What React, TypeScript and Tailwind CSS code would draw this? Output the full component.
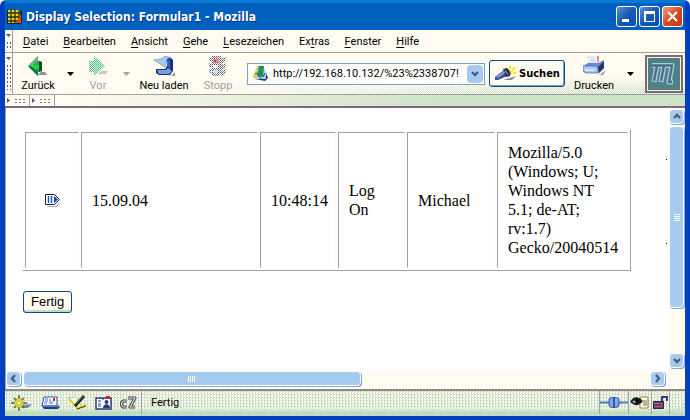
import React from "react";

const DITHER =
  "bg-[length:auto,auto,2px_2px] bg-[linear-gradient(to_bottom,#fffbf0_58%,transparent),linear-gradient(to_right,#fffbf0_30%,transparent_75%),conic-gradient(#c0dcc0_25%,#fffbf0_0_50%,#c0dcc0_0_75%,#fffbf0_0)]";
const DITHER_RIGHT =
  "bg-[length:auto,2px_2px] bg-[linear-gradient(to_right,#fffbf0_8%,transparent_65%),conic-gradient(#c0dcc0_25%,#dce8d0_0_50%,#c0dcc0_0_75%,#dce8d0_0)]";
const DITHER_STATUS =
  "bg-[length:auto,3px_3px] bg-[linear-gradient(to_bottom,transparent_70%,#c0dcc0_85%),conic-gradient(#c0dcc0_25%,#fffbf0_0_50%,#e4ecd8_0_75%,#fffbf0_0)]";

function Grip() {
  return (
    <div className="flex w-2 shrink-0 flex-col items-center gap-1 border-r border-[#a0a0a4] pt-1 pb-1">
      <svg width="5" height="3" aria-hidden="true"><path d="M0 0h5L2.5 3z" fill="#405890" /></svg>
      <div className="w-[5px] flex-1 bg-[radial-gradient(#506080_35%,transparent_40%)] bg-[length:3px_4px]" />
    </div>
  );
}

function SideGrip() {
  return (
    <div className="flex w-[25px] items-center gap-1 border-r border-[#a0a0a4] bg-[#fffbf0] pl-0.5">
      <svg width="3" height="5" aria-hidden="true"><path d="M0 0v5L3 2.5z" fill="#405890" /></svg>
      <div className="h-[6px] w-3 bg-[radial-gradient(#707880_35%,transparent_40%)] bg-[length:4px_3px]" />
    </div>
  );
}

function MenuItem({ pre = "", hot, post }: { pre?: string; hot: string; post: string }) {
  return (
    <button type="button" className="whitespace-nowrap">
      {pre}<span className="underline underline-offset-2">{hot}</span>{post}
    </button>
  );
}

function Caret({ label, dim = false }: { label: string; dim?: boolean }) {
  return (
    <button type="button" aria-label={label} className="flex w-3.5 shrink-0 items-center justify-center">
      <svg width="7" height="4"><path d="M0 0h7L3.500 4z" fill={dim ? "#a0a0a4" : "#000"} /></svg>
    </button>
  );
}

function Tool({ label, width, dim = false, children }: { label: string; width: string; dim?: boolean; children: React.ReactNode }) {
  return (
    <button type="button" className={`${width} ${dim ? "text-[#a0a0a4]" : "text-black"} flex shrink-0 flex-col items-center justify-between pt-[3px] pb-px whitespace-nowrap`}>
      {children}
      <span className="leading-[14px]">{label}</span>
    </button>
  );
}

function BackIcon() {
  return (
    <svg width="20" height="21" viewBox="0 0 20 21">
      <path d="M9 19h10l-2-3h-4z" fill="#909090" />
      <path d="M0 10 10 0v5l4 1v9l-4 1v4z" fill="#309858" />
      <path d="M0 10 10 0v5l-6 5z" fill="#68b880" />
      <path d="M3 9h10v4H6z" fill="#10e038" />
      <path d="M11 5v11l3-1V6z" fill="#085028" />
      <path d="M0 10 10 20v-4L4 11z" fill="#087840" />
    </svg>
  );
}

function ForwardIcon() {
  return (
    <svg width="20" height="21" viewBox="0 0 20 21">
      <defs><pattern id="fw" width="2" height="2" patternUnits="userSpaceOnUse"><rect width="2" height="2" fill="#e8f8e0" /><rect width="1" height="1" fill="#40b878" /><rect x="1" y="1" width="1" height="1" fill="#60c890" /></pattern></defs>
      <path d="M9 18h9l2-3h-6z" fill="#c8c8c8" />
      <path d="M1 5h5V0l11 10L6 20v-4H1z" fill="url(#fw)" />
    </svg>
  );
}

function ReloadIcon() {
  return (
    <svg width="21" height="21" viewBox="0 0 21 21">
      <path d="M14 19h4l3-3v4z" fill="#909090" />
      <path d="M11 1h5l3 3v11l-3 4H5l-3-2v-4h9l2-3V6z" fill="#183078" />
      <path d="M3 14h9l2-2 4 3-3 3H5z" fill="#70a0e0" />
      <path d="M0 4 7 3l4-3 6 2-4 1-2 8z" fill="#a6caf0" stroke="#6080c0" strokeWidth=".6" />
      <path d="M13 4h3v9l-3-3z" fill="#3060b8" />
    </svg>
  );
}

function StopIcon() {
  return (
    <svg width="20" height="21" viewBox="0 0 20 21">
      <defs><pattern id="st" width="2" height="2" patternUnits="userSpaceOnUse"><rect width="2" height="2" fill="#fffbf0" /><rect width="1" height="1" fill="#505068" /><rect x="1" y="1" width="1" height="1" fill="#8090a0" /></pattern></defs>
      <path d="M4 0h9v18l-2 2H5l-2-2zM13 2l5-1-1 4-4 3zM13 9l5-2-1 5-4 2zM13 15l5-2-1 5-4 2zM4 2 1 1v3l3 2zM4 8 1 7v3l3 2zM4 14l-3-1v3l3 2z" fill="url(#st)" />
      <path d="M5 3h6v4H5z" fill="#e09090" /><path d="M6 4h2v2H6zM9 6h1v1H9z" fill="#e03030" />
      <path d="M5 9h5v3H5z" fill="#fff" /><path d="M5 14h5v3H5z" fill="#c8e8f0" />
    </svg>
  );
}

function PrinterIcon() {
  return (
    <svg width="23" height="19" viewBox="0 0 23 19">
      <path d="M14 18h4l5-4-3 5z" fill="#909090" />
      <path d="M5 1h10l-1 8H6z" fill="#fff" stroke="#c0d0e0" strokeWidth=".7" />
      <path d="M7 3h5M7 5h6M7 7h6" stroke="#a6caf0" /><path d="M15 0v6" stroke="#e07070" strokeWidth="1.500" />
      <path d="M0 10 5 7h10l6-3v8l-5 5H3l-3-2z" fill="#6888d0" />
      <path d="M0 10h13l2 2v5H3l-3-2z" fill="#a6caf0" stroke="#5070b0" strokeWidth=".8" />
      <path d="M15 11 21 5v7l-5 5z" fill="#283870" /><path d="M2 14h9" stroke="#fff" />
    </svg>
  );
}

function PageIcon() {
  return (
    <svg width="17" height="17" viewBox="0 0 17 17" className="shrink-0">
      <path d="M5 1h6l5 11-3 3-12-2z" fill="#a6caf0" /><path d="m2 12 4-9M5 13l-2-4m9 4-2-5" stroke="#e8d820" strokeWidth="2" />
      <path d="M7 1h5l-1 11-6-1z" fill="#209060" /><path d="m3 14 10 2 3-3-2-5v6z" fill="#203878" /><path d="m3 9 2-1 4 6m2-2 2-4" fill="none" stroke="#2050c0" />
    </svg>
  );
}

function TorchIcon() {
  return (
    <svg width="23" height="17" viewBox="0 0 23 17">
      <path d="M9 15 22 11l-4 4z" fill="#8090a8" />
      <path d="m1 12 9-7 5 3-2 3-9 4H1z" fill="#405098" /><path d="m9 4 4-1 4 4-1 4-4 1z" fill="#283050" />
      <path d="m2 12 8-6 1 2-7 5z" fill="#80a0d8" /><path d="m11 5 3 5" stroke="#90a8d0" />
      <path d="M16 4V1m2 5 3-4m-2 6h3M16 6l2 2" stroke="#f8e800" strokeWidth="2" />
    </svg>
  );
}

function Arrow({ dir }: { dir: "up" | "down" | "left" | "right" }) {
  const paths = { up: "m2 6 3-3 3 3", down: "m2 3 3 3 3-3", left: "m6 1-3 3.500L6 8", right: "m3 1 3 3.500L3 8" };
  return <svg width="10" height="9" viewBox="0 0 10 9"><path d={paths[dir]} fill="none" stroke="#505880" strokeWidth="2.300" /></svg>;
}

function ScrollButton({ dir }: { dir: "up" | "down" | "left" | "right" }) {
  return (
    <button type="button" aria-label={`Scroll ${dir}`} className="flex size-[15px] shrink-0 items-center justify-center rounded-sm border border-white bg-[#a6caf0] shadow-[1px_1px_0_#80a8d8]">
      <Arrow dir={dir} />
    </button>
  );
}

function WindowButtons() {
  const box = "flex size-[21px] items-center justify-center rounded-[3px] border border-white";
  return (
    <div className="flex gap-0.5">
      <button type="button" aria-label="Minimize" className={`${box} bg-linear-to-br from-[#5890d8] via-[#1858b0] to-[#0050c0]`}>
        <svg width="15" height="15"><path d="M3 10h7v3H3z" fill="#fff" /></svg>
      </button>
      <button type="button" aria-label="Maximize" className={`${box} bg-linear-to-br from-[#5890d8] via-[#1858b0] to-[#0050c0]`}>
        <svg width="15" height="15"><path d="M2 2h11v11H2zM4 5v7h8V5z" fill="#fff" fillRule="evenodd" /></svg>
      </button>
      <button type="button" aria-label="Close" className={`${box} bg-linear-to-br from-[#f0a080] via-[#d84820] to-[#c83808]`}>
        <svg width="15" height="15"><path d="m3 3 9 9m0-9-9 9" stroke="#fff" strokeWidth="2.200" /></svg>
      </button>
    </div>
  );
}

function Navigator() {
  return (
    <svg width="22" height="16" viewBox="0 0 22 16"><path d="m12 10 9-1-4 4h-6z" fill="#6888b8" /><path d="M8 0v16M0 8h16M3 3l10 10M13 3 3 13" stroke="#606030" strokeWidth="1.500" /><circle cx="8" cy="8" r="4.500" fill="#f0e840" stroke="#a09820" /><path d="M6 6h4v4H6z" fill="#fff8b0" stroke="#a0a030" strokeWidth=".8" /></svg>
  );
}
function Mail() {
  return (
    <svg width="19" height="14" viewBox="0 0 19 14"><path d="M0 9h16l3 2-2 2H3z" fill="#283878" /><path d="M3 1h13v9H1z" fill="#fff" stroke="#3050b0" /><path d="M4 3h3M4 5h3m-4 2h3m3-4v5m2-3v3" stroke="#4070d0" /><path d="M12 2h2v3h-2z" fill="#e02020" /><path d="M1 10h17" stroke="#5080d0" strokeWidth="2" /></svg>
  );
}
function Composer() {
  return (
    <svg width="19" height="15" viewBox="0 0 19 15"><path d="m0 3 8-1 6 10-5 2z" fill="#fff" stroke="#a6a890" strokeWidth=".7" /><path d="m1 4 9 9 8-3" fill="none" stroke="#e8d800" strokeWidth="2" /><path d="m7 11 9-10" stroke="#202820" strokeWidth="3" /><path d="m8 9 7-8" stroke="#409060" /><path d="m9 14 9-3" stroke="#303030" /></svg>
  );
}
function AddressBook() {
  return (
    <svg width="17" height="14" viewBox="0 0 17 14"><path d="M1 2h6l1 1 1-1h7v11H1z" fill="#fff" stroke="#283878" strokeWidth="1.500" /><path d="M11 0h4v3h-4z" fill="#e02020" /><path d="M3 5h3M3 8h3m-3 2h3" stroke="#283878" /><circle cx="11.500" cy="6" r="2" fill="#283878" /><path d="M8 12c0-5 7-5 7 0z" fill="#283878" /></svg>
  );
}
function Chat() {
  return (
    <svg width="17" height="14" viewBox="0 0 17 14" fill="none" strokeLinejoin="round"><path d="M7 5H3L1.500 7v2L3 11h4M8 2h7l-5 9h5" stroke="#404048" strokeWidth="3.200" /><path d="M7 5H3L1.500 7v2L3 11h4M8 2h7l-5 9h5" stroke="#e0e8e0" strokeWidth="1.200" /></svg>
  );
}

export default function App() {
  return (
    <div className="flex h-screen min-w-[640px] flex-col overflow-hidden rounded-t-md border-x-[5px] border-b-4 border-[#0040c0] bg-[#fffbf0] font-[Roboto,sans-serif] text-[11px] leading-[14px] text-black">
      <header className="flex h-[30px] shrink-0 items-center gap-1 border-t-[3px] border-[#0878d0] bg-[#0060c0] pr-0.5 pl-0.5">
        <svg width="15" height="15" viewBox="0 0 15 15"><path d="M0 1h13l2 2v10l-2 2H0z" fill="#182028" /><path d="M1 1h12v10L9 14H1z" fill="#e8d030" /><path d="M4 0v15M8 0v15M12 1v12M0 4h14M0 8h14M0 12h12" stroke="#303010" strokeWidth="1.300" /><path d="m14 5-5 9h5z" fill="#d84818" /></svg>
        <h1 className="flex-1 font-['DejaVu_Sans_Condensed','DejaVu_Sans',sans-serif] text-xs font-bold whitespace-nowrap text-white [text-shadow:1px_1px_0_#003080] [font-stretch:condensed]">Display Selection: Formular1 - Mozilla</h1>
        <WindowButtons />
      </header>

      <nav className="flex h-[23px] shrink-0 border-b border-[#a0a0a4]">
        <Grip />
        <div className="flex items-center gap-[15px] pt-0.5 pl-2.5">
          <MenuItem hot="D" post="atei" />
          <MenuItem hot="B" post="earbeiten" />
          <MenuItem hot="A" post="nsicht" />
          <MenuItem hot="G" post="ehe" />
          <MenuItem hot="L" post="esezeichen" />
          <MenuItem pre="Ex" hot="t" post="ras" />
          <MenuItem hot="F" post="enster" />
          <MenuItem hot="H" post="ilfe" />
        </div>
      </nav>

      <div className={`flex h-[42px] shrink-0 border-b border-[#a0a0a4] ${DITHER}`}>
        <Grip />
        <Tool label="Zurück" width="w-[50px]"><BackIcon /></Tool>
        <Caret label="Zurück Verlauf" />
        <Tool label="Vor" width="w-[42px]" dim><ForwardIcon /></Tool>
        <Caret label="Vor Verlauf" dim />
        <Tool label="Neu laden" width="w-[62px]"><ReloadIcon /></Tool>
        <Tool label="Stopp" width="w-[46px]" dim><StopIcon /></Tool>
        <div className="ml-1.5 flex h-[22px] min-w-0 flex-1 items-center self-center border border-[#80a0c0] bg-white pl-1">
          <PageIcon />
          <input aria-label="Adresse" defaultValue="http://192.168.10.132/%23%2338707!" className="ml-1 min-w-0 flex-1 bg-transparent outline-none" />
          <button type="button" aria-label="Adressliste" className="mr-px flex h-[18px] w-4 items-center justify-center rounded-sm bg-[#a6caf0]"><Arrow dir="down" /></button>
        </div>
        <button type="button" className="ml-1 flex h-[27px] w-[76px] items-center justify-center gap-0.5 self-center rounded-[3px] border border-[#104880] bg-[#fffbf0] font-['DejaVu_Sans_Condensed','DejaVu_Sans',sans-serif] font-bold shadow-[inset_-1px_-1px_0_#80a0c0] [font-stretch:condensed]">
          <TorchIcon />Suchen
        </button>
        <Tool label="Drucken" width="w-[58px]"><PrinterIcon /></Tool>
        <Caret label="Druckoptionen" />
        <div className="mr-0.5 ml-2 flex size-[38px] shrink-0 items-center justify-center self-center border-2 border-[#806878] bg-[#f0f0e8]">
          <svg width="32" height="32" viewBox="0 0 32 32" fill="none" strokeLinejoin="round">
            <path d="M0 0h32v32H0z" fill="#508080" />
            <path d="M4 7.500h5L6 24m3-16.500h7L13 24m3-16.500h8l-3 16.500h4" stroke="#a6caf0" strokeWidth="5" />
            <path d="M4 7.500h5L6 23m3-15.500h7L13 23m3-15.500h8l-3 16.500h3" stroke="#487080" strokeWidth="2.400" />
          </svg>
        </div>
      </div>

      <div className={`flex h-[13px] shrink-0 border-b-2 border-[#806878] ${DITHER_RIGHT}`}>
        <SideGrip /><SideGrip />
      </div>

      <div className="flex min-h-0 flex-1 border-l border-[#a0a0a4]">
        <div className="flex min-w-0 flex-1 flex-col">
          <main className="relative min-h-0 flex-1 overflow-hidden bg-white pt-[21px] pl-4">
            <table className="w-[609px] table-fixed border-separate border-spacing-[2px] border border-t-[#fffbf0] border-r-[#a0a0a4] border-b-[#a0a0a4] border-l-[#fffbf0] font-['Liberation_Serif',serif] text-base leading-[19px] [&_td]:border [&_td]:border-t-[#a0a0a4] [&_td]:border-r-[#fffbf0] [&_td]:border-b-[#fffbf0] [&_td]:border-l-[#a0a0a4] [&_td]:py-2.5 [&_td]:pl-2.5">
              <colgroup>
                <col className="w-[54px]" /><col className="w-[177px]" /><col className="w-[76px]" /><col className="w-[67px]" /><col className="w-[88px]" /><col />
              </colgroup>
              <tbody>
                <tr>
                  <td>
                    <a href="#eintrag" aria-label="Eintrag öffnen" className="flex justify-center pr-2">
                      <svg width="16" height="13" viewBox="0 0 16 13"><path d="M2 12h9l5-5-4 6H2z" fill="#b0b0b0" /><path d="M.5.5h9l5 5-5 5h-9z" fill="#fff" stroke="#182030" /><path d="M3.500 2v7m3-7v7" stroke="#2058d0" strokeWidth="1.500" /><path d="M9 2v7l4-3.500z" fill="#1038d0" /></svg>
                    </a>
                  </td>
                  <td>15.09.04</td>
                  <td>10:48:14</td>
                  <td>Log<br />On</td>
                  <td>Michael</td>
                  <td>Mozilla/5.0<br />(Windows; U;<br />Windows NT<br />5.1; de-AT;<br />rv:1.7)<br />Gecko/20040514</td>
                </tr>
              </tbody>
            </table>
            <button type="button" className="mt-5 ml-px h-[22px] rounded-[3px] border border-[#104880] bg-[#fffbf0] px-[7px] font-['Liberation_Sans',sans-serif] text-[13px] shadow-[inset_0_-2px_0_#c0dcc0]">Fertig</button>
            <span className="absolute top-12 right-0.5 h-1 w-px border-t border-b border-t-[#a6caf0] border-b-black" />
            <span className="absolute top-[132px] right-0.5 h-1 w-px border-t border-b border-t-[#a6caf0] border-b-black" />
          </main>
          <div className="flex h-[18px] shrink-0 items-start gap-0.5 pr-1">
            <ScrollButton dir="left" />
            <div className="h-[15px] flex-1">
              <div className="flex h-full w-[54%] items-center justify-center rounded-sm border border-white bg-[#a6caf0] shadow-[1px_1px_0_#80a8d8]">
                <span className="flex gap-px"><i className="h-1.5 w-px bg-white" /><i className="h-1.5 w-px bg-white" /><i className="h-1.5 w-px bg-white" /><i className="h-1.5 w-px bg-white" /></span>
              </div>
            </div>
            <ScrollButton dir="right" />
          </div>
        </div>
        <div className="flex w-4 shrink-0 flex-col gap-0.5 pt-px pb-[21px]">
          <ScrollButton dir="up" />
          <div className="w-[15px] flex-1">
            <div className="flex h-[81%] flex-col items-center justify-center gap-px rounded-sm border border-white bg-[#a6caf0] shadow-[1px_1px_0_#80a8d8]">
              <i className="h-px w-1.5 bg-white" /><i className="h-px w-1.5 bg-white" /><i className="h-px w-1.5 bg-white" /><i className="h-px w-1.5 bg-white" />
            </div>
          </div>
          <ScrollButton dir="down" />
        </div>
      </div>

      <footer className={`flex h-[27px] shrink-0 items-stretch border-t-2 border-[#908888] pb-0.5 ${DITHER_STATUS}`}>
        <div className="flex items-center gap-2 border-r border-[#a0a0a4] pr-1 pl-1.5">
          <button type="button" aria-label="Navigator"><Navigator /></button>
          <button type="button" aria-label="Mail"><Mail /></button>
          <button type="button" aria-label="Composer"><Composer /></button>
          <button type="button" aria-label="Adressbuch"><AddressBook /></button>
          <button type="button" aria-label="Chat"><Chat /></button>
        </div>
        <p className="flex-1 self-center pl-[9px]">Fertig</p>
        <div className="flex items-center border-l border-[#a0a0a4]">
          <svg width="28" height="11" viewBox="0 0 28 11"><path d="M0 5.500h28" stroke="#5080b8" strokeWidth="2" /><path d="M9 2 12 0h4l3 2v7l-3 2h-4L9 9z" fill="#80a8e0" stroke="#283888" strokeWidth=".8" /><path d="M14 0v11" stroke="#1838c0" strokeWidth="1.500" /></svg>
        </div>
        <div className="flex items-center border-l border-[#a0a0a4] px-px">
          <svg width="20" height="14" viewBox="0 0 20 14"><path d="M10 1h8v11h-8z" fill="#fffbe0" stroke="#908848" /><path d="M13 5h4m-4 2h4m-4 2h4" stroke="#707038" /><path d="M0 6c4-7 9-5 13-1-5 6-8 5-13 1" fill="#202020" /><path d="M2 6c3-2 4-2 6-1-1 2-3 2-6 1" fill="#a6caf0" /><circle cx="7" cy="5" r="2" fill="#000" /></svg>
        </div>
        <div className="flex w-[18px] items-center justify-center border-l border-[#a0a0a4]">
          <svg width="15" height="13" viewBox="0 0 15 13"><path d="M9 6V1h5v4" fill="none" stroke="#304080" strokeWidth="2" /><path d="M.5 5.500h10v7H.5z" fill="#983048" stroke="#202840" /><path d="M1 7.500h9M1 10.500h9" stroke="#5078c0" /></svg>
        </div>
        <div className="flex w-4 items-end justify-end border-l border-[#a0a0a4]">
          <svg width="11" height="11"><path d="M8 0h2v2H8zM4 4h2v2H4zM8 4h2v2H8zM0 8h2v2H0zM4 8h2v2H4zM8 8h2v2H8z" fill="#d8d8d0" /></svg>
        </div>
      </footer>
    </div>
  );
}
